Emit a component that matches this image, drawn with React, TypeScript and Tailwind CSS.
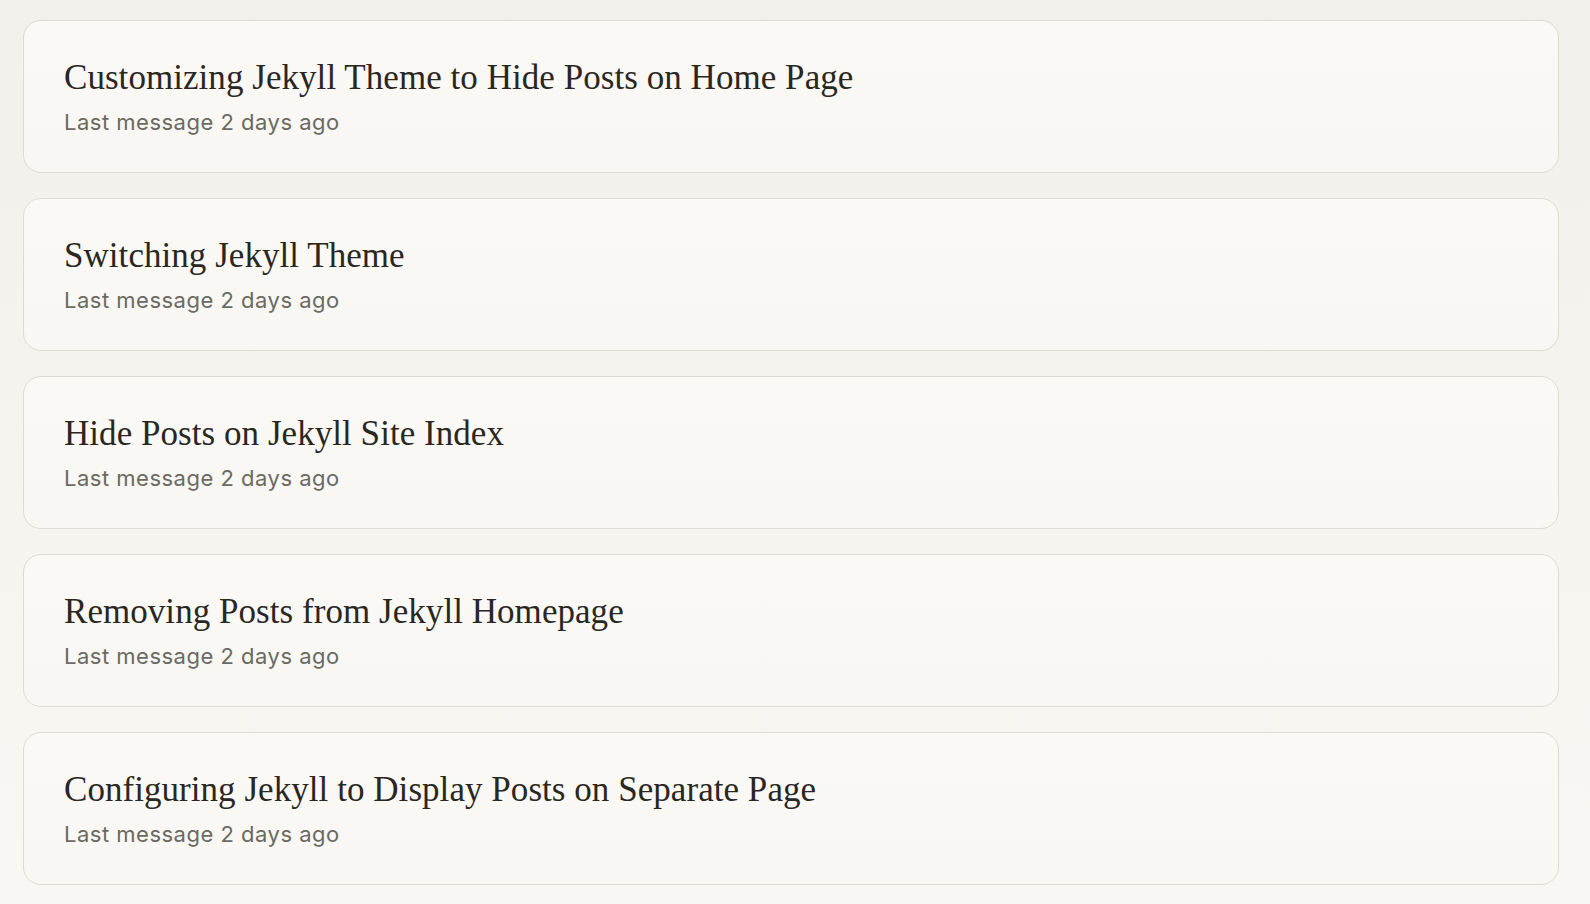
import React from "react";

const items = [
  "Customizing Jekyll Theme to Hide Posts on Home Page",
  "Switching Jekyll Theme",
  "Hide Posts on Jekyll Site Index",
  "Removing Posts from Jekyll Homepage",
  "Configuring Jekyll to Display Posts on Separate Page",
];

export default function App() {
  return (
    <div className="w-[1590px] h-[904px] overflow-hidden bg-gradient-to-b from-[#f1f0eb] to-[#f8f7f3] pl-[23px] pr-[31px] pt-[20px]">
      <div className="flex flex-col gap-[25px]">
        {items.map((t) => (
          <div
            key={t}
            className="h-[153px] rounded-[18px] border border-[#dddbd3] bg-gradient-to-b from-[#faf9f5] to-[#f8f7f3] px-10 pt-[37px]"
          >
            <div
              className="text-[35px] leading-[40.8px] text-[#29271f] tracking-[0.05px]"
              style={{ fontFamily: '"Liberation Serif", serif' }}
            >
              {t}
            </div>
            <div
              className="mt-[9px] text-[22px] leading-[28px] text-[#6b6a62] tracking-[0.5px]"
              style={{ fontFamily: "Inter, sans-serif" }}
            >
              Last message 2 days ago
            </div>
          </div>
        ))}
      </div>
    </div>
  );
}
